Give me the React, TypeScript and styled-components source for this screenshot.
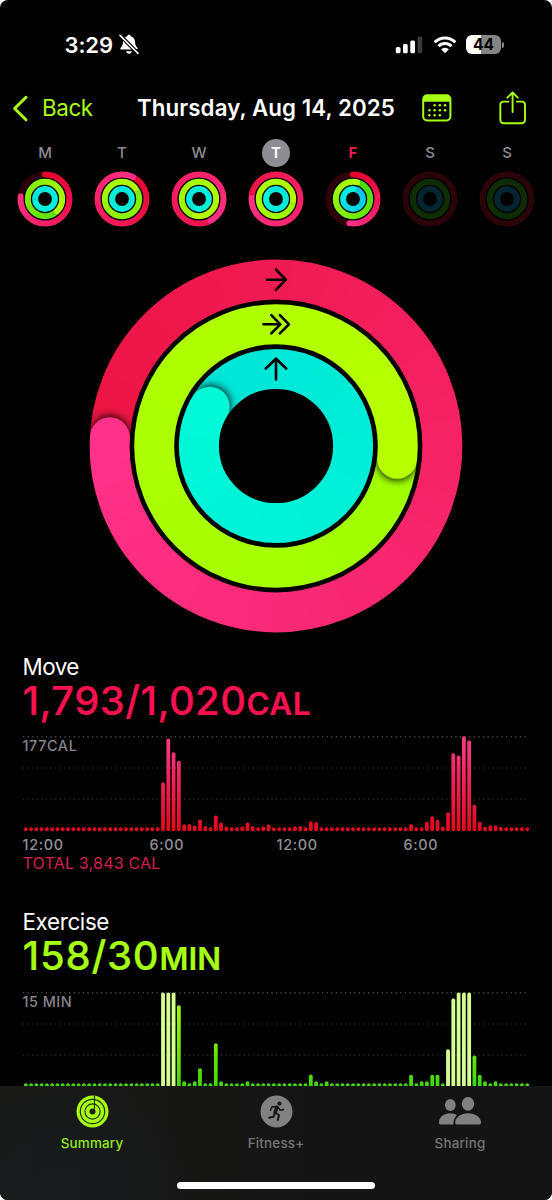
import React from "react";
import styled, { createGlobalStyle } from "styled-components";

const GlobalStyle = createGlobalStyle`
  *, *::before, *::after { box-sizing: border-box; }
  html, body { margin: 0; background: #fff; }
  body { font-family: Inter, "Liberation Sans", sans-serif; -webkit-font-smoothing: antialiased; }
`;

const LIME = "#a6ff14";

const Screen = styled.main`
  display: flex;
  flex-direction: column;
  width: 552px;
  height: 1200px;
  overflow: hidden;
  border-radius: 8px;
  background: #000;
  color: #fff;
  > * { flex: none; }
`;

/* One line of text: the box height fixes the rhythm, the glyphs sit centred in it. */
const Label = styled.span<{ $size: number; $line: number; $weight?: number; $color?: string; $track?: number }>`
  display: block;
  margin: 0;
  white-space: nowrap;
  font-size: ${(p) => p.$size}px;
  line-height: ${(p) => p.$line}px;
  font-weight: ${(p) => p.$weight ?? 400};
  color: ${(p) => p.$color ?? "#fff"};
  letter-spacing: ${(p) => p.$track ?? 0}px;
`;

const StatusBar = styled.header`
  display: flex;
  justify-content: space-between;
  align-items: center;
  height: 89px;
  padding: 0 48px 0 64.5px;
`;

const StatusGroup = styled.div<{ $gap: number }>`
  display: flex;
  align-items: center;
  gap: ${(p) => p.$gap}px;
`;

const Battery = styled.div`
  display: flex;
  align-items: center;
  gap: 1px;
  &::after {
    content: "";
    width: 2px;
    height: 6px;
    border-radius: 0 3px 3px 0;
    background: #858585;
  }
`;

const BatteryBody = styled.div`
  width: 35px;
  height: 19px;
  border-radius: 6px;
  background: linear-gradient(90deg, #fff 44%, #858585 44%);
  color: #000;
  font-size: 15.5px;
  font-weight: 700;
  line-height: 19px;
  text-align: center;
`;

const NavBar = styled.nav`
  display: grid;
  grid-template-columns: 125px 285px 77px 1fr;
  align-items: center;
  height: 38px;
  padding-left: 12px;
`;

const BackButton = styled.button`
  display: flex;
  align-items: center;
  gap: 13px;
  padding: 0;
  border: 0;
  background: none;
  font-family: inherit;
`;

const IconButton = styled.button`
  display: flex;
  padding: 0;
  border: 0;
  background: none;
`;

const Week = styled.section`
  display: grid;
  grid-template-columns: repeat(7, 77px);
  justify-content: center;
  padding-top: 12px;
`;

const Day = styled.div`
  display: flex;
  flex-direction: column;
  align-items: center;
  gap: 4px;
`;

const DayLetter = styled.span<{ $tone: "plain" | "selected" | "today" }>`
  width: 28px;
  height: 28px;
  border-radius: 50%;
  text-align: center;
  line-height: 28px;
  font-size: 15px;
  font-weight: ${(p) => (p.$tone === "plain" ? 500 : 600)};
  color: ${(p) => (p.$tone === "plain" ? "#8d8c92" : p.$tone === "today" ? "#f01f50" : "#fff")};
  background: ${(p) => (p.$tone === "selected" ? "#8e8d93" : "none")};
`;

const RingsPanel = styled.section`
  display: flex;
  justify-content: center;
  height: 426px;
  padding-top: 32.2px;
`;

const Content = styled.div`
  height: 433px;
  overflow: hidden;
`;

const Metric = styled.section`
  display: flex;
  flex-direction: column;
  height: 255.3px;
  padding: 0 22.5px;
`;

const Amount = styled.div<{ $color: string }>`
  display: flex;
  align-items: baseline;
  height: 42px;
  line-height: 40px;
  color: ${(p) => p.$color};
  white-space: nowrap;
  -webkit-text-stroke: 0.2px currentColor;
`;

const Figures = styled.span<{ $track: number }>`
  font-size: 40px;
  font-weight: 500;
  letter-spacing: ${(p) => p.$track}px;
`;

const Unit = styled.span<{ $track: number }>`
  font-size: 31.4px;
  font-weight: 600;
  letter-spacing: ${(p) => p.$track}px;
`;

const Chart = styled.div`
  display: grid;
  margin-top: 13.3px;
  height: 96px;
  > * { grid-area: 1 / 1; }
`;

const Axis = styled.div`
  display: grid;
  grid-template-columns: 127px 127px 127px 1fr;
  margin-top: 2.9px;
`;

const TabBar = styled.footer`
  display: flex;
  flex-direction: column;
  align-items: center;
  height: 114px;
  background: radial-gradient(circle at 60px 110px, #171b1e 0, rgba(20, 20, 20, 0) 130px),
    linear-gradient(90deg, #191a17, #141414 60%);
`;

const Tabs = styled.div`
  display: grid;
  grid-template-columns: repeat(3, 184px);
  height: 96px;
  flex: none;
`;

const Tab = styled.div`
  display: flex;
  flex-direction: column;
  align-items: center;
  padding-top: 9px;
  gap: 5px;
`;

const HomeIndicator = styled.div`
  width: 198px;
  height: 7px;
  border-radius: 4px;
  background: #fff;
  flex: none;
`;

type RGB = [number, number, number];
const rgb = (c: RGB) => `rgb(${c.map(Math.round).join(",")})`;
const mix = (a: RGB, b: RGB, t: number): RGB => [
  a[0] + (b[0] - a[0]) * t,
  a[1] + (b[1] - a[1]) * t,
  a[2] + (b[2] - a[2]) * t,
];

interface ArcSpec {
  end: number;
  full?: boolean;
  from: RGB;
  to: RGB;
}

interface RingProps {
  id: string;
  c: number;
  r: number;
  w: number;
  arc?: ArcSpec;
  track: string;
  shade: number;
}

/* A ring whose last lap ends at `end` degrees, clockwise from the top. */
function Ring({ id, c, r, w, arc, track, shade }: RingProps) {
  const at = (deg: number) => {
    const a = ((deg - 90) * Math.PI) / 180;
    return [c + r * Math.cos(a), c + r * Math.sin(a)];
  };
  const piece = (a: number, b: number) => {
    const [x1, y1] = at(a);
    const [x2, y2] = at(b);
    return `M${x1.toFixed(2)} ${y1.toFixed(2)}A${r} ${r} 0 0 1 ${x2.toFixed(2)} ${y2.toFixed(2)}`;
  };
  if (!arc) return <circle cx={c} cy={c} r={r} fill="none" stroke={track} strokeWidth={w} />;
  const start = arc.full ? arc.end - 360 : 0;
  const span = arc.end - start;
  const steps = Math.ceil(span / 4);
  const size = span / steps;
  /* neighbouring pieces overlap by about two pixels, so no seam shows */
  const overlap = Math.max(1, 110 / r);
  const shadowStep = steps - 13;
  const [ex, ey] = at(arc.end);
  const [sx, sy] = at(start);
  const [shx, shy] = at(arc.end + (w * 0.05 * 180) / (Math.PI * r));
  const parts: React.ReactNode[] = [];
  for (let i = 0; i < steps; i++) {
    if (i === shadowStep && arc.full) {
      parts.push(<circle key="shadow" cx={shx} cy={shy} r={w * 0.51} fill="#000" opacity={shade} filter={`url(#${id}b)`} />);
    }
    const a = start + i * size;
    parts.push(
      <path key={i} d={piece(a, Math.min(a + size + overlap, arc.end))} stroke={rgb(mix(arc.from, arc.to, (i + 0.5) / steps))} strokeWidth={w + 2} fill="none" />
    );
  }
  return (
    <g>
      <defs>
        <mask id={id} maskUnits="userSpaceOnUse" x="0" y="0" width={c * 2} height={c * 2}>
          <circle cx={c} cy={c} r={r} fill="none" stroke="#fff" strokeWidth={w} />
        </mask>
        <filter id={`${id}b`} x="-60%" y="-60%" width="220%" height="220%">
          <feGaussianBlur stdDeviation={w * 0.09} />
        </filter>
      </defs>
      <g mask={`url(#${id})`}>
        <circle cx={c} cy={c} r={r} fill="none" stroke={arc.full ? rgb(arc.from) : track} strokeWidth={w + 2} />
        {!arc.full && <circle cx={sx} cy={sy} r={w / 2} fill={rgb(arc.from)} />}
        {parts}
        <circle cx={ex} cy={ey} r={w / 2} fill={rgb(arc.to)} />
      </g>
    </g>
  );
}

const PINK: RGB = [255, 48, 134];
const RED: RGB = [229, 0, 44];
const YELLOWGREEN: RGB = [180, 255, 0];
const CYAN: RGB = [0, 242, 218];
const TEAL: RGB = [0, 230, 220];

interface DaySpec {
  letter: string;
  tone: "plain" | "selected" | "today";
  arcs?: [ArcSpec, ArcSpec, ArcSpec];
}

const days: DaySpec[] = [
  { letter: "M", tone: "plain", arcs: [
    { end: 276, from: RED, to: PINK },
    { end: 137, full: true, from: [92, 224, 16], to: YELLOWGREEN },
    { end: 250, full: true, from: TEAL, to: CYAN } ] },
  { letter: "T", tone: "plain", arcs: [
    { end: 27, full: true, from: [230, 6, 48], to: PINK },
    { end: 53, full: true, from: [120, 235, 8], to: YELLOWGREEN },
    { end: 325, full: true, from: TEAL, to: CYAN } ] },
  { letter: "W", tone: "plain", arcs: [
    { end: 153, full: true, from: [236, 18, 74], to: PINK },
    { end: 196, full: true, from: [156, 250, 0], to: YELLOWGREEN },
    { end: 190, full: true, from: TEAL, to: CYAN } ] },
  { letter: "T", tone: "selected", arcs: [
    { end: 273, full: true, from: [236, 20, 68], to: PINK },
    { end: 96, full: true, from: [158, 252, 0], to: YELLOWGREEN },
    { end: 300, full: true, from: TEAL, to: CYAN } ] },
  { letter: "F", tone: "today", arcs: [
    { end: 188, from: RED, to: PINK },
    { end: 15, full: true, from: [64, 220, 16], to: YELLOWGREEN },
    { end: 4, full: true, from: [12, 190, 236], to: CYAN } ] },
  { letter: "S", tone: "plain" },
  { letter: "S", tone: "plain" },
];

function MiniRings({ arcs, id }: { arcs?: DaySpec["arcs"]; id: string }) {
  const geometry = [24.5, 17.2, 9.9];
  const tracks = arcs ? ["#2e0008", "#123a08", "#053040"] : ["#2b0409", "#0f2d05", "#052530"];
  return (
    <svg width="56" height="56" viewBox="0 0 56 56">
      {geometry.map((r, i) => (
        <Ring key={r} id={`${id}-${i}`} c={28} r={r} w={6} arc={arcs?.[i]} track={tracks[i]} shade={i === 2 ? 0.2 : 0.35} />
      ))}
    </svg>
  );
}

function BigRings() {
  return (
    <svg width="374" height="374" viewBox="0 0 374 374">
      <Ring id="move" c={187} r={166.4} w={40} track="#300" shade={0.75} arc={{ end: 273, full: true, from: [236, 20, 66], to: [255, 49, 138] }} />
      <Ring id="exercise" c={187} r={121.8} w={40} track="#030" shade={0.75} arc={{ end: 96, full: true, from: [160, 255, 0], to: [183, 255, 0] }} />
      <Ring id="stand" c={187} r={77.1} w={40} track="#033" shade={0.75} arc={{ end: 300.6, full: true, from: [0, 228, 216], to: [0, 250, 216] }} />
      <g fill="none" stroke="#000" strokeWidth="2.6" strokeLinecap="round" strokeLinejoin="round">
        <path d="M178 20.7H196.5M187 10.5L196.8 20.7L187 30.9" />
        <path d="M174.4 65.3H190.5M182.3 56.2L191.3 65.3L182.3 74.4M190.9 56.2L199.9 65.3L190.9 74.4" />
        <path d="M187 120.5V100M176.8 109.5L187 99.7L197.2 109.5" />
      </g>
    </svg>
  );
}

const COUNT = 96;
const moveBars: Record<number, number> = {
  26: 49, 27: 92.7, 28: 79, 29: 70.4, 30: 7, 31: 7.3, 32: 5.7, 33: 11.7, 34: 5.2, 36: 15.7, 37: 8.7, 38: 4.7,
  41: 5, 42: 8.7, 43: 5.3, 45: 4.8, 46: 6.7, 51: 5, 52: 5.2, 54: 10, 55: 9.3, 73: 7.3, 76: 9.4, 77: 15, 78: 11.4,
  79: 4.7, 80: 19, 81: 78, 82: 75.7, 83: 95, 84: 90.7, 85: 26.4, 86: 9.4, 87: 4.4, 88: 6, 89: 6, 90: 4.5,
};
const exerciseBars: Record<number, number> = {
  26: 94.6, 27: 94.6, 28: 94.6, 29: 82, 30: 6, 32: 6, 33: 19, 36: 44, 37: 6, 42: 6, 54: 12.7, 55: 6, 57: 6, 73: 12.4,
  75: 6, 76: 6, 77: 12.4, 78: 12.4, 80: 38, 81: 88.7, 82: 94.6, 83: 94.6, 84: 94.6, 85: 31.7, 86: 12.4, 87: 6, 89: 6,
};
const brightBars = [26, 27, 28, 80, 81, 82, 83, 84];

interface BarsProps {
  id: string;
  values: Record<number, number>;
  low: string;
  high: string;
  bright?: number[];
}

function Bars({ id, values, low, high, bright = [] }: BarsProps) {
  const base = 95.2;
  return (
    <svg width="507" height="96" viewBox="0 0 507 96">
      <defs>
        <linearGradient id={id} gradientUnits="userSpaceOnUse" x1="0" y1={base} x2="0" y2="0">
          <stop offset="0" stopColor={low} />
          <stop offset="1" stopColor={high} />
        </linearGradient>
      </defs>
      {[0.8, 32, 63].map((y) => (
        <line key={y} x1="0" x2="506" y1={y} y2={y} stroke={y < 1 ? "#5c5c5c" : "#414141"} strokeWidth="1.2" strokeDasharray="1.2 3.4" />
      ))}
      {Array.from({ length: COUNT }, (_, i) => {
        const h = values[i] ?? 3.9;
        return (
          <rect key={i} x={2.8 + i * 5.278 - 1.9} y={base - h} width="3.8" height={h} rx="1.8" fill={bright.includes(i) ? "#d6ff94" : `url(#${id})`} />
        );
      })}
    </svg>
  );
}

const ChevronLeft = () => (
  <svg width="17" height="27" viewBox="0 0 17 27">
    <path d="M14 2.3L2.6 13.5L14 24.7" fill="none" stroke={LIME} strokeWidth="3" strokeLinecap="round" strokeLinejoin="round" />
  </svg>
);

const MutedBell = () => (
  <svg width="20" height="21" viewBox="0 0 20 21">
    <path d="M10 .8C9 .8 8.3 1.5 8.2 2.3 5.6 3 4.2 5 4 7.7 3.8 11 3.2 12 1.8 13.5 1 14.3 1.2 15.6 2.6 15.6H17.4C18.8 15.6 19 14.3 18.2 13.5 16.8 12 16.2 11 16 7.7 15.8 5 14.4 3 11.8 2.3 11.7 1.5 11 .8 10 .8Z" fill="#fff" />
    <path d="M7 17.3H13C12.6 18.9 11.5 19.8 10 19.8S7.4 18.9 7 17.3Z" fill="#fff" />
    <path d="M1 1.2L19.4 19.8" stroke="#000" strokeWidth="3.8" />
    <path d="M1 1.4L19 19.4" stroke="#fff" strokeWidth="1.5" strokeLinecap="round" />
  </svg>
);

const Signal = () => (
  <svg width="28" height="18" viewBox="0 0 28 18">
    <rect x="0.8" y="11" width="4.7" height="6.2" rx="1.5" fill="#fff" />
    <rect x="8" y="8" width="4.7" height="9.2" rx="1.5" fill="#fff" />
    <rect x="15.3" y="4.4" width="4.7" height="12.8" rx="1.5" fill="#fff" />
    <rect x="22.5" y="0.6" width="4.7" height="16.6" rx="1.5" fill="#3b3b3b" />
  </svg>
);

const Wifi = () => (
  <svg width="24" height="18" viewBox="0 0 24 18">
    <g fill="none" stroke="#fff" strokeWidth="3">
      <path d="M1.6 6.2A14.7 14.7 0 0 1 22.4 6.2" />
      <path d="M5.5 10.3A9.2 9.2 0 0 1 18.5 10.3" />
    </g>
    <path d="M12 17.2L8.1 13.3A5.5 5.5 0 0 1 15.9 13.3Z" fill="#fff" />
  </svg>
);

const CalendarIcon = () => (
  <svg width="30" height="28" viewBox="0 0 30 28">
    <rect x="1.2" y="1.2" width="27.2" height="25.2" rx="4" fill="none" stroke={LIME} strokeWidth="2" />
    <path d="M1.2 7.8V5A4 4 0 0 1 5.2 1.2H24.4A4 4 0 0 1 28.4 5V7.8Z" fill={LIME} />
    {[[12.6, 11.3], [17.8, 11.3], [23, 11.3], [7.4, 16.3], [12.6, 16.3], [17.8, 16.3], [23, 16.3], [7.4, 21.2], [12.6, 21.2], [17.8, 21.2]].map(([x, y]) => (
      <circle key={`${x}-${y}`} cx={x} cy={y} r="1.25" fill={LIME} />
    ))}
  </svg>
);

const ShareIcon = () => (
  <svg width="28" height="34" viewBox="0 0 28 34">
    <g fill="none" stroke={LIME} strokeWidth="1.9" strokeLinecap="round" strokeLinejoin="round">
      <path d="M9.4 10.6H4.5A3.2 3.2 0 0 0 1.3 13.8V29A3.2 3.2 0 0 0 4.5 32.2H22.8A3.2 3.2 0 0 0 26 29V13.8A3.2 3.2 0 0 0 22.8 10.6H17.9" />
      <path d="M13.6 21V1.6M8.4 6.7L13.6 1.5L18.8 6.7" />
    </g>
  </svg>
);

const SummaryIcon = () => (
  <svg width="33" height="33" viewBox="0 0 33 33">
    <circle cx="16.5" cy="16.5" r="16" fill={LIME} />
    <g fill="none" stroke="#20300c" strokeWidth="1.2">
      <circle cx="16.5" cy="16.5" r="12.2" />
      <circle cx="16.5" cy="16.5" r="7.6" />
      <path d="M18.5 0.8V9M18.5 9V14" />
    </g>
    <circle cx="16.5" cy="16.5" r="3" fill="#1b210f" />
  </svg>
);

const FitnessIcon = () => (
  <svg width="33" height="33" viewBox="0 0 33 33">
    <circle cx="16.5" cy="16.5" r="16" fill="#818181" />
    <circle cx="19.5" cy="8.6" r="2.1" fill="#171717" />
    <g fill="none" stroke="#171717" strokeLinecap="round" strokeLinejoin="round">
      <path d="M16.8 12.3L15.2 17.4" strokeWidth="3.6" />
      <path d="M16.5 11.6L12.1 11.9L10.5 15.2M18.2 12.4L20.4 15.2L23.4 14.6" strokeWidth="1.6" />
      <path d="M15.6 17.7L19 20.2L17.8 25M14.8 18L13.6 21.7L9.2 22.8" strokeWidth="2" />
    </g>
  </svg>
);

const SharingIcon = () => (
  <svg width="44" height="33" viewBox="0 0 44 33">
    <g fill="#818181">
      <ellipse cx="12.3" cy="10" rx="5.4" ry="6" />
      <path d="M1 27.5C1 22 6 18.3 12 18.3 14.6 18.3 17 19 18.8 20.2 16.7 22.2 15.3 25 15.4 29.5H2.6C1.4 29.5 1 28.8 1 27.5Z" />
      <ellipse cx="30" cy="8.8" rx="6.2" ry="6.9" />
      <path d="M17.2 27.6C17.2 22.5 22.6 18.2 30.2 18.2S43 22.5 43 27.6C43 28.9 42.3 29.5 41.2 29.5H19C17.8 29.5 17.2 28.9 17.2 27.6Z" />
    </g>
  </svg>
);

const AXIS_LABELS = ["12:00", "6:00", "12:00", "6:00"];

export default function App() {
  return (
    <Screen>
      <GlobalStyle />
      <StatusBar>
        <StatusGroup $gap={6}>
          <Label $size={22} $line={28} $weight={600} $track={-0.1}>3:29</Label>
          <MutedBell />
        </StatusGroup>
        <StatusGroup $gap={9.5}>
          <Signal />
          <Wifi />
          <Battery>
            <BatteryBody>44</BatteryBody>
          </Battery>
        </StatusGroup>
      </StatusBar>

      <NavBar>
        <BackButton>
          <ChevronLeft />
          <Label $size={22.4} $line={28} $color={LIME} $track={-0.4}>Back</Label>
        </BackButton>
        <Label as="h1" $size={22.3} $line={28} $weight={600} $track={0.1}>Thursday, Aug 14, 2025</Label>
        <IconButton aria-label="Calendar"><CalendarIcon /></IconButton>
        <IconButton aria-label="Share"><ShareIcon /></IconButton>
      </NavBar>

      <Week>
        {days.map((d, i) => (
          <Day key={i}>
            <DayLetter $tone={d.tone}>{d.letter}</DayLetter>
            <MiniRings arcs={d.arcs} id={`day${i}`} />
          </Day>
        ))}
      </Week>

      <RingsPanel>
        <BigRings />
      </RingsPanel>

      <Content>
        <Metric>
          <Label $size={22.4} $line={28} $track={-0.5}>Move</Label>
          <Amount $color="#fa1150">
            <Figures $track={0.4}>1,793/1,020</Figures>
            <Unit $track={0.6}>CAL</Unit>
          </Amount>
          <Chart>
            <Bars id="moveFill" values={moveBars} low="#e3081c" high="#fb3a8c" />
            <Label $size={14.4} $line={20} $weight={500} $color="#85848a" $track={0.6}>177CAL</Label>
          </Chart>
          <Axis>
            {AXIS_LABELS.map((t, i) => (
              <Label key={i} $size={14.4} $line={19} $weight={500} $color="#929197" $track={0.7}>{t}</Label>
            ))}
          </Axis>
          <Label $size={16} $line={18} $color="#d41f4f" $track={0.2}>TOTAL 3,843 CAL</Label>
        </Metric>
        <Metric>
          <Label $size={22.4} $line={28} $track={-0.35}>Exercise</Label>
          <Amount $color={LIME}>
            <Figures $track={0.8}>158/30</Figures>
            <Unit $track={0}>MIN</Unit>
          </Amount>
          <Chart>
            <Bars id="exerciseFill" values={exerciseBars} low="#3fd60c" high="#a8ff06" bright={brightBars} />
            <Label $size={14.4} $line={20} $weight={500} $color="#85848a" $track={0.5}>15 MIN</Label>
          </Chart>
        </Metric>
      </Content>

      <TabBar>
        <Tabs>
          <Tab>
            <SummaryIcon />
            <Label $size={13.4} $line={20} $weight={500} $color="#98e820" $track={0.2}>Summary</Label>
          </Tab>
          <Tab>
            <FitnessIcon />
            <Label $size={13.4} $line={20} $weight={500} $color="#767676" $track={0.2}>Fitness+</Label>
          </Tab>
          <Tab>
            <SharingIcon />
            <Label $size={13.4} $line={20} $weight={500} $color="#767676" $track={0.2}>Sharing</Label>
          </Tab>
        </Tabs>
        <HomeIndicator />
      </TabBar>
    </Screen>
  );
}
